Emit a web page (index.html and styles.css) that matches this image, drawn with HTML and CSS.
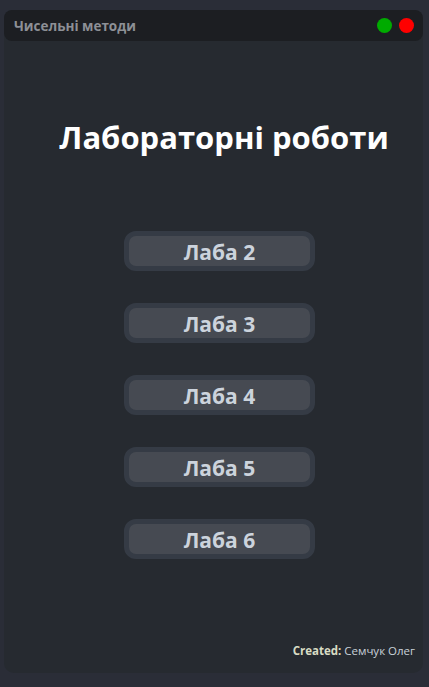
FILE: index.html
```html
<!DOCTYPE html>
<html lang="uk">
<head>
<meta charset="utf-8">
<title>Чисельні методи</title>
<link rel="stylesheet" href="styles.css">
</head>
<body>
<div class="window">
  <div class="titlebar">
    <span class="app-name">Чисельні методи</span>
    <div class="controls">
      <span class="dot green"></span>
      <span class="dot red"></span>
    </div>
  </div>
  <h1 class="heading">Лабораторні роботи</h1>
  <div class="labs">
    <button class="lab"><span>Лаба 2</span></button>
    <button class="lab"><span>Лаба 3</span></button>
    <button class="lab"><span>Лаба 4</span></button>
    <button class="lab"><span>Лаба 5</span></button>
    <button class="lab"><span>Лаба 6</span></button>
  </div>
  <div class="footer"><b>Created:</b> Семчук Олег</div>
</div>
</body>
</html>
```
FILE: styles.css
```css
html, body {
  margin: 0;
  padding: 0;
  background: #2a2d37;
  height: 100%;
}
body {
  font-family: "Open Sans", "Noto Sans", sans-serif;
  padding: 10px 6px 14px 4px;
  box-sizing: border-box;
}
.window {
  height: 663px;
  background: #262a30;
  border-radius: 10px;
  display: flex;
  flex-direction: column;
}
.titlebar {
  height: 31px;
  background: #1c1e22;
  border-radius: 8px;
  display: flex;
  align-items: center;
  justify-content: space-between;
  padding: 0 9px 0 10px;
}
.app-name {
  color: #8d9096;
  font-weight: 700;
  font-size: 13.5px;
}
.controls {
  display: flex;
  gap: 7px;
}
.dot {
  width: 15px;
  height: 15px;
  border-radius: 50%;
}
.green { background: #00ab00; }
.red { background: #ff0000; }
.heading {
  margin: 75px 0 0 0;
  text-align: center;
  color: #ffffff;
  font-weight: 700;
  font-size: 31px;
  line-height: 42px;
  padding-left: 21px;
}
.labs {
  margin-top: 73px;
  display: flex;
  flex-direction: column;
  align-items: center;
  gap: 32px;
  padding-left: 12px;
}
.lab {
  width: 191px;
  height: 40px;
  border: 5px solid #353b45;
  background: #464a52;
  border-radius: 12px;
  padding: 2px 0 0 0;
  display: flex;
  align-items: center;
  justify-content: center;
  font-family: "Open Sans", "Noto Sans", sans-serif;
  font-weight: 700;
  font-size: 21px;
  color: #ccd3dc;
}
.footer {
  margin-top: auto;
  align-self: flex-end;
  padding: 0 8px 15px 0;
  font-size: 11.5px;
  color: #c9d1d9;
}
.footer b {
  color: #d8dcc4;
}
```
